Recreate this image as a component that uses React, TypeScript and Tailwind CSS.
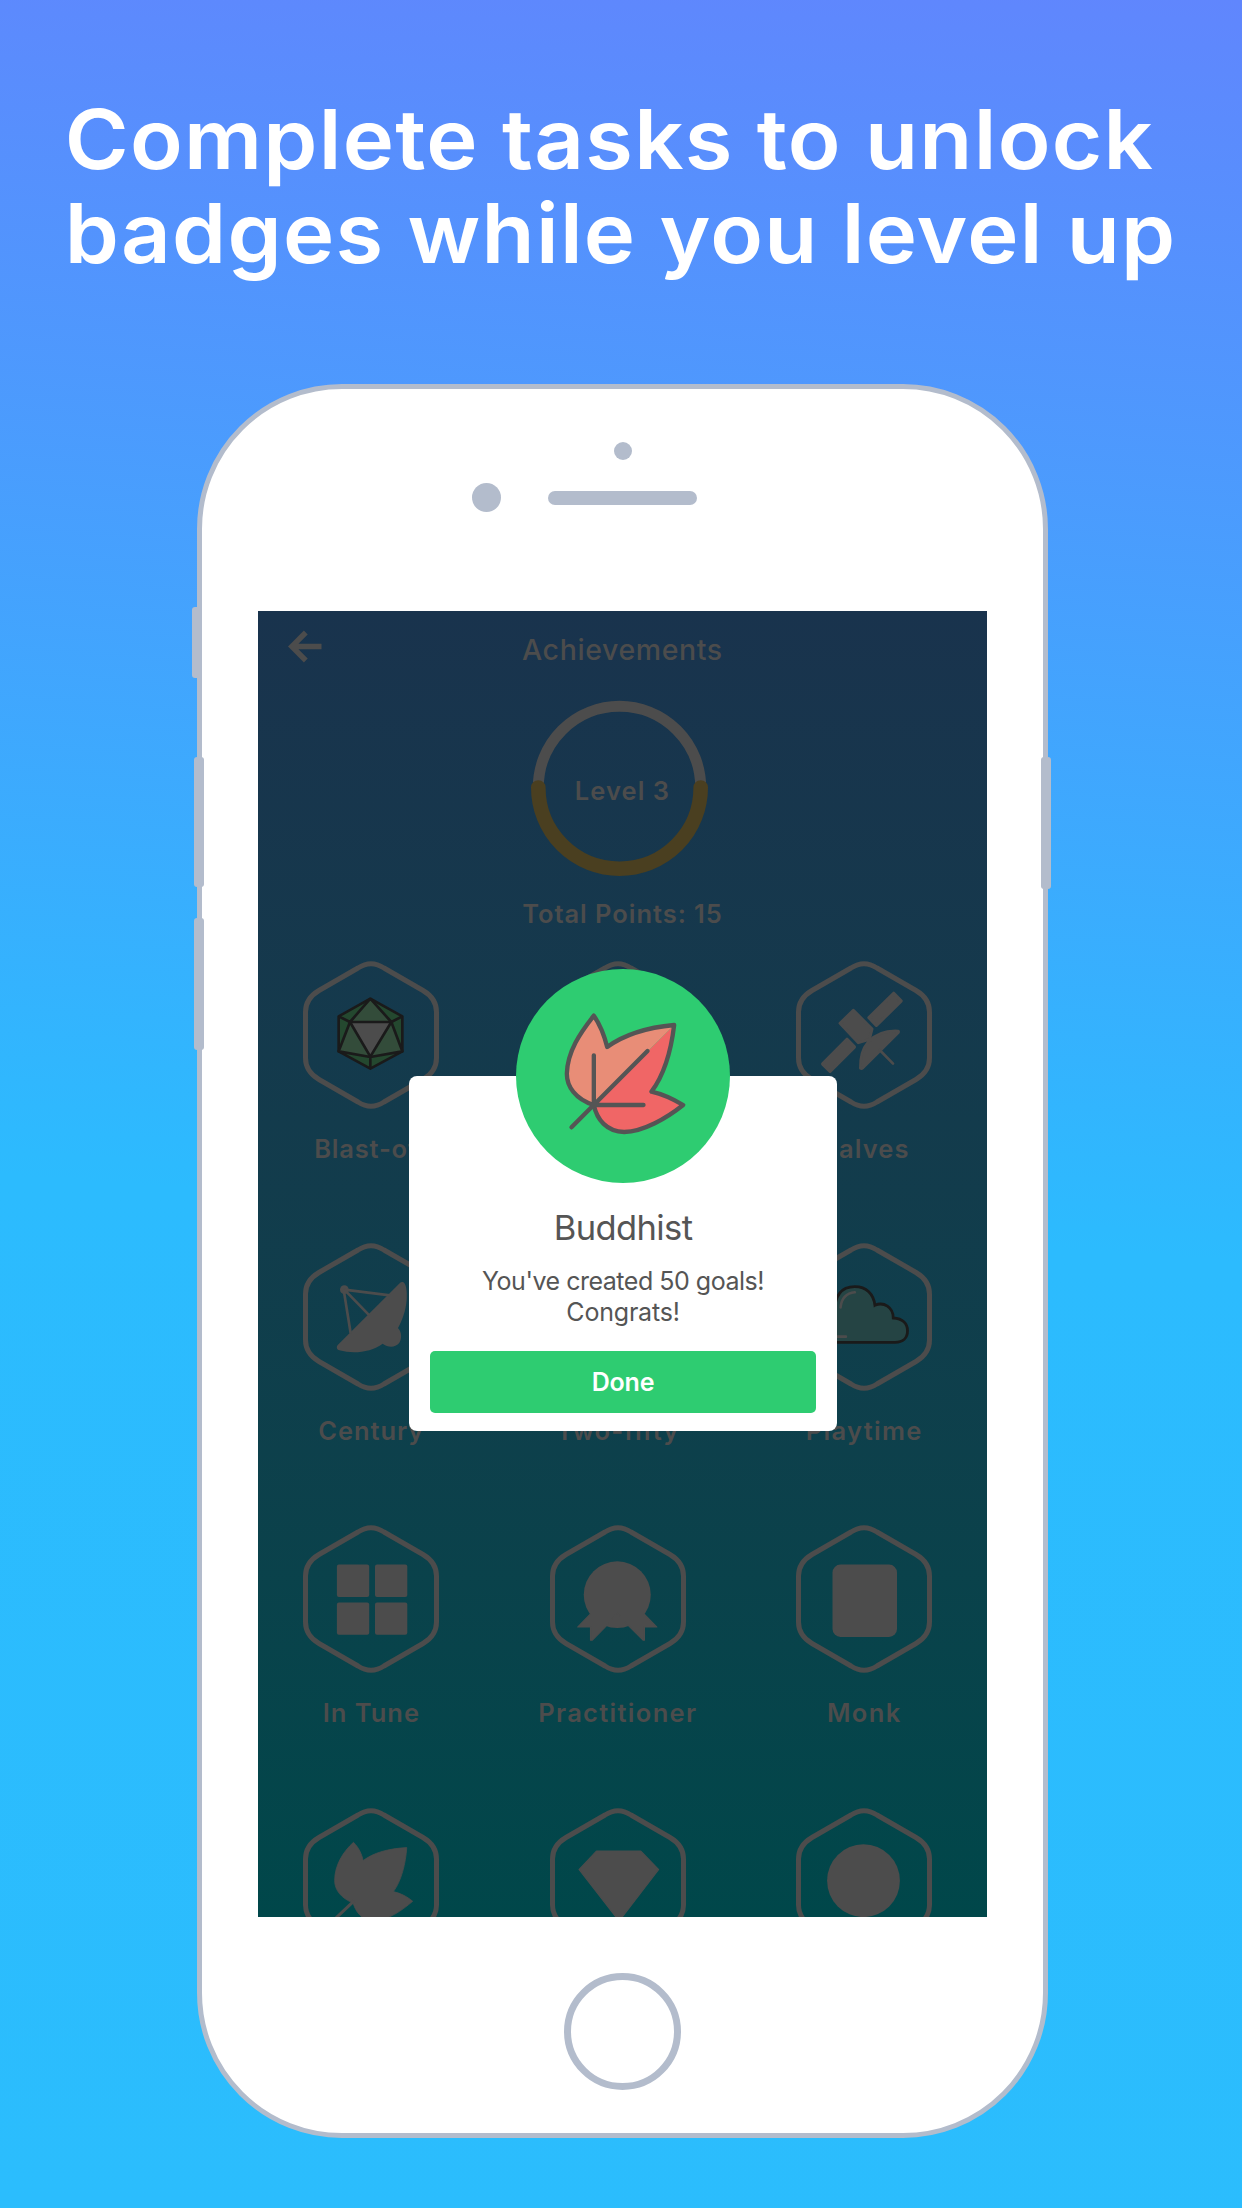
import type { ReactNode } from "react";

const HEXAGON =
  "M2.5 51C2.5 41 7.5 34.5 16 29.5L55 7Q68 -1.5 81 7L120 29.5C128.5 34.5 133.5 41 133.5 51V97C133.5 107 128.5 113.5 120 118.5L81 141Q68 149.5 55 141L16 118.5C7.5 113.5 2.5 107 2.5 97Z";

function Badge({ label, tracking, children }: { label: string; tracking: string; children?: ReactNode }) {
  return (
    <div className="flex h-[282.1px] w-[136px] flex-col items-center">
      <svg className="h-[148px] w-[136px] shrink-0 overflow-visible" viewBox="0 0 136 148" fill="none">
        <path d={HEXAGON} stroke="#4c4c4c" strokeWidth="5" />
        {children}
      </svg>
      <span className={`mt-[24px] text-[25.5px] leading-[32px] font-semibold whitespace-nowrap text-[#4c4c4c] ${tracking}`}>
        {label}
      </span>
    </div>
  );
}

function Dice() {
  return (
    <g transform="translate(-23 -21) scale(.33333)" stroke="#1a1a1a" strokeWidth="8" strokeLinejoin="round">
      <path d="M271 176L367 229V334L271 386L176 334V229Z" fill="#24482f" />
      <path d="M271 178L334 245L367 334L271 351L176 334L210 245Z" fill="#334c3a" stroke="none" />
      <path d="M210 246H334L271 350Z" fill="#4c4c4c" />
      <path d="M271 176L210 246L176 229M271 176L334 246L367 229M210 246L176 334L271 351L367 334L334 246M271 351V386" />
    </g>
  );
}

function Satellite() {
  return (
    <g transform="translate(-36.3 -21) scale(.33333)" fill="#4c4c4c" stroke="#4c4c4c" strokeLinejoin="round" strokeLinecap="round">
      <path d="M402 160L424 183L350 256L328 233Z" strokeWidth="10" />
      <path d="M281 211L337 267L329 298L296 308L241 250Z" strokeWidth="9" />
      <path d="M262 298L284 321L211 394L189 372Z" strokeWidth="10" />
      <path d="M415 273C375 271 345 285 325 306C307 327 301 352 302 385Q306 387 309 384L416 278Q418 274 415 273Z" strokeWidth="8" />
      <path d="M360 330L400 371" strokeWidth="8" />
    </g>
  );
}

function Dish() {
  return (
    <g transform="translate(-23 -23) scale(.33333)" fill="#4c4c4c">
      <path d="M368 186C378 188 382 212 380 240C377 274 366 302 354 324C366 336 366 358 357 370C344 385 322 382 308 371C274 396 222 403 178 391C170 388 168 380 174 374L359 190Q363 185 368 186Z" />
      <circle cx="193" cy="209" r="13" />
      <path d="M193 209L330 226M193 209L268 286M191 209L212 340" stroke="#4c4c4c" strokeWidth="8" />
    </g>
  );
}

function Cloud() {
  return (
    <g transform="translate(-506.3 -23) scale(.4464 .33333)" strokeLinecap="round">
      <path
        d="M1187 367C1165 367 1160 300 1192 292C1197 280 1210 276 1220 281C1220 220 1240 200 1266 200C1292 200 1308 222 1311 256C1331 244 1352 262 1352 294C1374 296 1384 312 1384 332C1384 354 1374 367 1356 367Z"
        fill="#254444"
        stroke="#1a1a1a"
        strokeWidth="2.8"
        vectorEffect="non-scaling-stroke"
      />
      <path d="M1234 262C1236 236 1246 220 1266 217M1198 350H1246" stroke="#4c4c4c" strokeWidth="2.6" vectorEffect="non-scaling-stroke" />
    </g>
  );
}

function Tiles() {
  return (
    <g fill="#4c4c4c">
      <rect x="33.9" y="39.6" width="32.3" height="32.3" rx="2" />
      <rect x="72" y="39.6" width="32.3" height="32.3" rx="2" />
      <rect x="33.9" y="77.4" width="32.3" height="32.3" rx="2" />
      <rect x="72" y="77.4" width="32.3" height="32.3" rx="2" />
    </g>
  );
}

function Ribbon() {
  return (
    <g transform="translate(-269.8 -25.3) scale(.4592 .33333)" fill="#4c4c4c" stroke="#4c4c4c" strokeLinejoin="round">
      <ellipse cx="734" cy="285" rx="73" ry="100" stroke="none" />
      <path d="M676 342L648 382H676V422H679L712 376L734 340L757 376L791 422H793V382H820L792 342Z" strokeWidth="3" />
    </g>
  );
}

function Leaf() {
  return (
    <g transform="translate(-23 -17.4) scale(.4592 .33333)">
      <path
        d="M160 155C172 172 178 190 181 210C204 186 236 174 276 171C274 218 264 272 247 303C263 308 277 318 289 332C264 361 237 388 205 390C178 390 166 366 159 337C135 324 119 300 119 270C119 224 137 184 160 155Z"
        fill="#4c4c4c"
        stroke="#4c4c4c"
        strokeWidth="2"
      />
      <path d="M162 330L122 382" stroke="#4c4c4c" strokeWidth="3" vectorEffect="non-scaling-stroke" />
    </g>
  );
}

function Gem() {
  return (
    <g transform="translate(-269.8 -17.4) scale(.4592 .33333)">
      <path d="M689 181H785L824 237L742 384H734L651 237Z" fill="#4c4c4c" stroke="#4c4c4c" strokeWidth="3" strokeLinejoin="round" />
    </g>
  );
}

function LevelRing() {
  return (
    <div className="ml-[273px] grid h-[177px] w-[177px] place-items-center">
      <svg className="col-start-1 row-start-1 h-[177px] w-[177px]" viewBox="0 0 177 177" fill="none">
        <circle cx="88.5" cy="87.5" r="81.2" stroke="#4c4c4c" strokeWidth="11" />
        <path d="M7.3 87.5A81.2 81.2 0 0 0 169.7 87.5" stroke="#4a3f20" strokeWidth="14.6" strokeLinecap="round" />
      </svg>
      <span className="col-start-1 row-start-1 mt-[5px] ml-[6px] text-[25.5px] leading-[32px] font-semibold tracking-[1.05px] whitespace-nowrap text-[#4c4c4c]">
        Level 3
      </span>
    </div>
  );
}

function Modal() {
  return (
    <div className="absolute top-[358px] left-[151px] flex w-[428px] flex-col items-center">
      <svg className="z-10 h-[214px] w-[214px]" viewBox="47.5 58 642 642" fill="none">
        <circle cx="368.5" cy="379" r="321" fill="#2ecc71" />
        <path d="M281 198C300 225 312 256 321 292C368 258 435 234 522 226L281 466C225 448 200 410 200 365C203 305 240 250 281 198Z" fill="#e88d77" />
        <path d="M522 226C512 310 492 375 454 426C490 434 520 449 549 466C500 505 430 546 372 547C320 546 290 510 281 466Z" fill="#f06666" />
        <g stroke="#555" strokeWidth="13" strokeLinecap="round" strokeLinejoin="round">
          <path d="M281 466C225 448 200 410 200 372C202 305 240 250 281 198C300 225 312 256 321 292C368 258 435 234 522 226C512 310 492 375 454 426C490 434 520 449 549 466C500 505 430 546 372 547C320 546 290 510 281 466Z" />
          <path d="M281 317V466H430M214 533L442 304" />
        </g>
      </svg>
      <div className="-mt-[107px] flex h-[355px] w-full flex-col items-center rounded-[8px] bg-white px-[21px] pt-[131px] text-[#555]">
        <h2 className="text-[34.5px] leading-[42px] font-normal tracking-[-0.6px]">Buddhist</h2>
        <p className="mt-[17px] flex flex-col items-center text-[25px] leading-[30.5px]">
          <span className="tracking-[-0.48px]">You've created 50 goals!</span>
          <span className="tracking-[-0.2px]">Congrats!</span>
        </p>
        <button className="mt-[24px] h-[62px] w-full rounded-[5px] bg-[#2ecc71] text-[25px] leading-[32px] font-semibold tracking-[-0.2px] text-white">
          Done
        </button>
      </div>
    </div>
  );
}

function Screen() {
  return (
    <div className="relative mt-[222px] ml-[56px] h-[1306px] w-[729px] overflow-hidden bg-linear-to-b from-[#19334d] to-[#00474a]">
      <header className="flex h-[89px] items-start">
        <svg className="mt-[19px] ml-[30px] h-[33px] w-[35px]" viewBox="0 0 35 33" fill="none" stroke="#4c4c4c" strokeWidth="5.4" strokeLinejoin="miter">
          <path d="M17.8 2.5L3.8 16.5L17.8 30.5M3.8 16.5H33.5" />
        </svg>
        <h1 className="mt-[21px] ml-[199px] text-[28.5px] leading-[36px] font-medium tracking-[0.6px] whitespace-nowrap text-[#4c4c4c]">
          Achievements
        </h1>
      </header>
      <LevelRing />
      <p className="mt-[20px] text-center text-[25.5px] leading-[34px] font-semibold tracking-[0.95px] text-[#4c4c4c]">Total Points: 15</p>
      <div className="mt-[30.3px] ml-[45.3px] grid w-[629px] grid-cols-[136px_136px_136px] gap-x-[110.5px]">
        <Badge label="Blast-off" tracking="tracking-[0.8px]"><Dice /></Badge>
        <Badge label="Fifty" tracking="tracking-[1px]" />
        <Badge label="Halves" tracking="tracking-[1.1px]"><Satellite /></Badge>
        <Badge label="Century" tracking="tracking-[0.9px]"><Dish /></Badge>
        <Badge label="Two-fifty" tracking="tracking-[1px]" />
        <Badge label="Playtime" tracking="tracking-[1.3px]"><Cloud /></Badge>
        <Badge label="In Tune" tracking="tracking-[1px]"><Tiles /></Badge>
        <Badge label="Practitioner" tracking="tracking-[1.3px]"><Ribbon /></Badge>
        <Badge label="Monk" tracking="tracking-[1.4px]">
          <rect x="36.5" y="39.6" width="64.5" height="72.3" rx="8" fill="#4c4c4c" />
        </Badge>
        <Badge label="" tracking=""><Leaf /></Badge>
        <Badge label="" tracking=""><Gem /></Badge>
        <Badge label="" tracking="">
          <circle cx="67.5" cy="72.7" r="36.4" fill="#4c4c4c" />
        </Badge>
      </div>
      <Modal />
    </div>
  );
}

export default function App() {
  return (
    <main className="flex h-[2208px] w-[1242px] flex-col overflow-hidden bg-[linear-gradient(184deg,#6086fd_0%,#2cbbfe_55%,#2bbdfd_100%)] font-['Inter',sans-serif]">
      <div className="h-[384px] shrink-0 origin-left scale-x-[1.045] pt-[91.5px] pl-[62px] text-[83px] leading-[94.7px] font-semibold whitespace-nowrap text-white">
        <div className="tracking-[1.2px]">Complete tasks to unlock</div>
        <div className="tracking-[1.2px]">badges while you level up</div>
      </div>
      <div className="relative ml-[197px] h-[1754px] w-[851px] shrink-0 rounded-[145px] border-[5px] border-[#b3bccc] bg-white">
        <div className="absolute top-[218px] left-[-10px] h-[71px] w-[6px] rounded-l-[3px] bg-[#b3bccc]" />
        <div className="absolute top-[368px] left-[-8px] h-[130px] w-[10px] rounded-[3px] bg-[#b3bccc]" />
        <div className="absolute top-[529px] left-[-8px] h-[132px] w-[10px] rounded-[3px] bg-[#b3bccc]" />
        <div className="absolute top-[368px] right-[-8px] h-[132px] w-[10px] rounded-[3px] bg-[#b3bccc]" />
        <div className="absolute top-[52.5px] left-[412px] h-[18px] w-[18px] rounded-full bg-[#b3bccc]" />
        <div className="absolute top-[94px] left-[270px] h-[29px] w-[29px] rounded-full bg-[#b3bccc]" />
        <div className="absolute top-[102px] left-[346px] h-[14px] w-[149px] rounded-full bg-[#b3bccc]" />
        <Screen />
        <div className="mt-[56px] ml-[362px] h-[117px] w-[117px] rounded-full border-[7px] border-[#b3bccc]" />
      </div>
    </main>
  );
}
